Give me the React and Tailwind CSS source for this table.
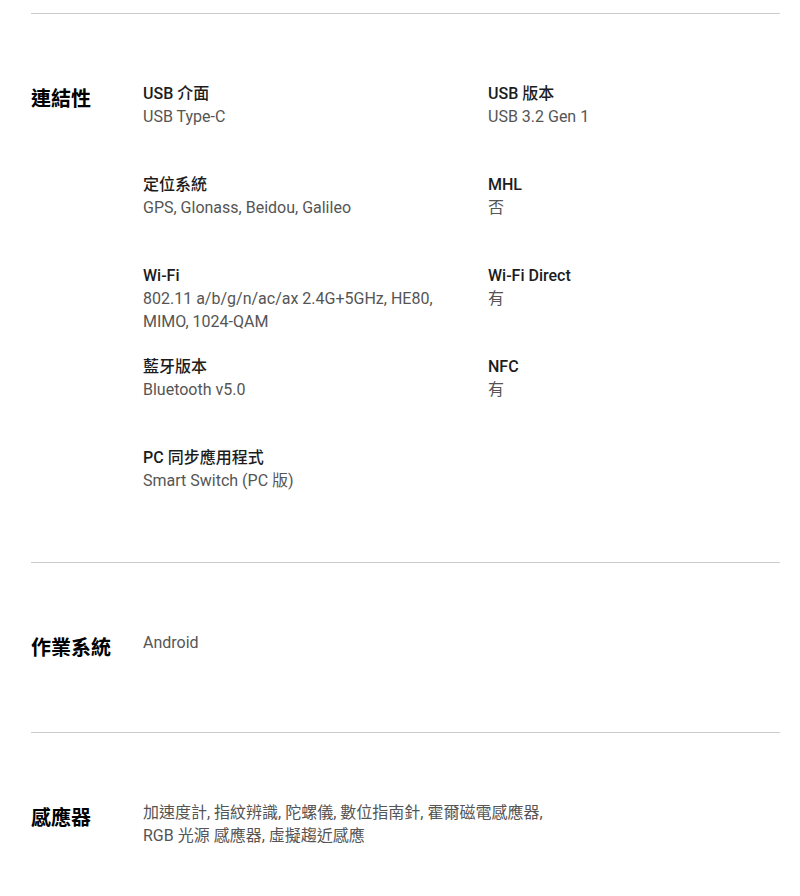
import React from 'react'

const connectivity = [
  { label: 'USB 介面', value: 'USB Type-C' },
  { label: 'USB 版本', value: 'USB 3.2 Gen 1' },
  { label: '定位系統', value: 'GPS, Glonass, Beidou, Galileo' },
  { label: 'MHL', value: '否' },
  { label: 'Wi-Fi', value: '802.11 a/b/g/n/ac/ax 2.4G+5GHz, HE80, MIMO, 1024-QAM' },
  { label: 'Wi-Fi Direct', value: '有' },
  { label: '藍牙版本', value: 'Bluetooth v5.0' },
  { label: 'NFC', value: '有' },
  { label: 'PC 同步應用程式', value: 'Smart Switch (PC 版)' },
]

const font = { fontFamily: 'Roboto, "Noto Sans CJK TC", sans-serif' }

const SectionTitle = ({ children }) => (
  <h3 className="w-[112px] shrink-0 pt-[3px] text-[20px] leading-[28px] font-bold text-black">{children}</h3>
)

const App = () => {
  return (
    <div className="min-h-screen w-full bg-white pl-[31px] pr-[20px] pt-[13px]" style={font}>
      <section className="border-t border-[#cccccc] pt-[68px] pb-[25px] flex">
        <SectionTitle>連結性</SectionTitle>
        <div className="grid grid-cols-[345px_300px]">
          {connectivity.map((item) => (
            <div key={item.label} className="h-[69px] mb-[22px] w-[300px] text-[16px] leading-[23px]">
              <div className="font-medium text-[#1c1c1c]">{item.label}</div>
              <div className="text-[#555555]">{item.value}</div>
            </div>
          ))}
        </div>
      </section>

      <section className="border-t border-[#cccccc] pt-[68px] h-[170px] flex">
        <SectionTitle>作業系統</SectionTitle>
        <div className="text-[16px] leading-[23px] text-[#555555]">Android</div>
      </section>

      <section className="border-t border-[#cccccc] pt-[68px] pb-[40px] flex">
        <SectionTitle>感應器</SectionTitle>
        <div className="w-[420px] text-[16px] leading-[23px] text-[#555555]">
          加速度計, 指紋辨識, 陀螺儀, 數位指南針, 霍爾磁電感應器, RGB 光源 感應器, 虛擬趨近感應
        </div>
      </section>
    </div>
  )
}

export default App
